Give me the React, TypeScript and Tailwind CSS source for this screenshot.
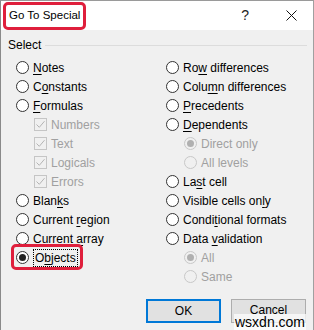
import React from 'react';

type Item = { label: string; key?: number; checked?: boolean; disabled?: boolean; sub?: 'check' | 'radio' };

const left: Item[] = [
  { label: 'Notes', key: 0 },
  { label: 'Constants', key: 1 },
  { label: 'Formulas', key: 0 },
  { label: 'Numbers', sub: 'check', checked: true, disabled: true },
  { label: 'Text', sub: 'check', checked: true, disabled: true },
  { label: 'Logicals', sub: 'check', checked: true, disabled: true },
  { label: 'Errors', sub: 'check', checked: true, disabled: true },
  { label: 'Blanks', key: 4 },
  { label: 'Current region', key: 8 },
  { label: 'Current array', key: 8 },
  { label: 'Objects', key: 1, checked: true },
];

const right: Item[] = [
  { label: 'Row differences', key: 2 },
  { label: 'Column differences', key: 4 },
  { label: 'Precedents', key: 0 },
  { label: 'Dependents', key: 0 },
  { label: 'Direct only', sub: 'radio', checked: true, disabled: true },
  { label: 'All levels', sub: 'radio', disabled: true },
  { label: 'Last cell', key: 2 },
  { label: 'Visible cells only', key: 16 },
  { label: 'Conditional formats', key: 5 },
  { label: 'Data validation', key: 5 },
  { label: 'All', sub: 'radio', checked: true, disabled: true },
  { label: 'Same', sub: 'radio', disabled: true },
];

function Label({ text, k }: { text: string; k?: number }) {
  if (k === undefined) return <>{text}</>;
  return (
    <>
      {text.slice(0, k)}
      <span className="underline underline-offset-2">{text[k]}</span>
      {text.slice(k + 1)}
    </>
  );
}

function Radio({ checked, disabled }: { checked?: boolean; disabled?: boolean }) {
  return (
    <span
      className={`flex items-center justify-center w-[13px] h-[13px] rounded-full border shrink-0 ${
        disabled ? 'border-[#c8c8c8] bg-[#f0f0f0]' : 'border-[#333333] bg-white'
      }`}
    >
      {checked && (
        <span className={`w-[7px] h-[7px] rounded-full ${disabled ? 'bg-[#b0b0b0]' : 'bg-[#222222]'}`} />
      )}
    </span>
  );
}

function Check() {
  return (
    <span className="flex items-center justify-center w-[13px] h-[13px] border border-[#c5c5c5] bg-[#f0f0f0] shrink-0">
      <svg width="11" height="11" viewBox="0 0 11 11">
        <path d="M1.5 5.5 L4.3 8.3 L9.5 2.2" fill="none" stroke="#b4b4b4" strokeWidth="1" />
      </svg>
    </span>
  );
}

function Row({ item }: { item: Item }) {
  const muted = item.disabled ? 'text-[#a0a0a0]' : 'text-[#000000]';
  return (
    <div className={`flex items-center h-[19px] gap-[4px] ${item.sub ? 'pl-[18px]' : ''}`}>
      {item.sub === 'check' ? <Check /> : <Radio checked={item.checked} disabled={item.disabled} />}
      <span className={`${muted} leading-none`}>
        {item.label === 'Objects' ? (
          <span className="border border-dotted border-black px-[1px] py-[1px]">
            <Label text={item.label} k={item.key} />
          </span>
        ) : (
          <Label text={item.label} k={item.key} />
        )}
      </span>
    </div>
  );
}

export default function App() {
  return (
    <div
      className="relative w-[314px] h-[330px] bg-[#f0f0f0] border-l border-r border-t border-l-[#8a8a8a] border-r-[#a0a0a0] border-t-[#9a9a9a] text-[12px] overflow-hidden"
      style={{ fontFamily: '"Liberation Sans", Arial, sans-serif' }}
    >
      {/* title bar */}
      <div className="flex items-center h-[29px] bg-white pl-[8px] pr-[16px]">
        <span className="text-[11.5px] text-black">Go To Special</span>
        <span className="ml-auto text-[14px] text-[#222] mr-[37px]">?</span>
        <svg width="11" height="11" viewBox="0 0 11 11">
          <path d="M0.5 0.5 L10.5 10.5 M10.5 0.5 L0.5 10.5" stroke="#111" strokeWidth="1" />
        </svg>
      </div>

      {/* group header */}
      <div className="flex items-center h-[20px] mt-[5px] pl-[7px] pr-[6px] gap-[4px]">
        <span className="text-black">Select</span>
        <span className="flex-1 h-px bg-[#dcdcdc]" />
      </div>

      <div className="flex mt-[3px]">
        <div className="flex flex-col w-[165px] pl-[15px]">
          {left.map((it) => (
            <Row key={it.label} item={it} />
          ))}
        </div>
        <div className="flex flex-col">
          {right.map((it) => (
            <Row key={it.label} item={it} />
          ))}
        </div>
      </div>

      {/* buttons */}
      <div className="flex justify-end gap-[10px] pr-[7px] mt-[13px]">
        <button className="w-[75px] h-[24px] bg-[#e1e1e1] border-2 border-[#0078d7] text-black">OK</button>
        <button className="w-[75px] h-[24px] bg-[#e1e1e1] border border-[#adadad] text-black pb-[3px]">Cancel</button>
      </div>

      {/* highlight boxes */}
      <div className="absolute left-[2px] top-[1px] w-[83px] h-[28px] border-[3px] border-[#df1f3c] rounded-[5px]" />
      <div className="absolute left-[10px] top-[243px] w-[72px] h-[26px] border-[3px] border-[#df1f3c] rounded-[5px]" />

      {/* watermark */}
      <div className="absolute left-[233px] top-[313px] px-[1px] bg-white/70 text-[14px] leading-[16px] text-black">
        wsxdn.com
      </div>
    </div>
  );
}
